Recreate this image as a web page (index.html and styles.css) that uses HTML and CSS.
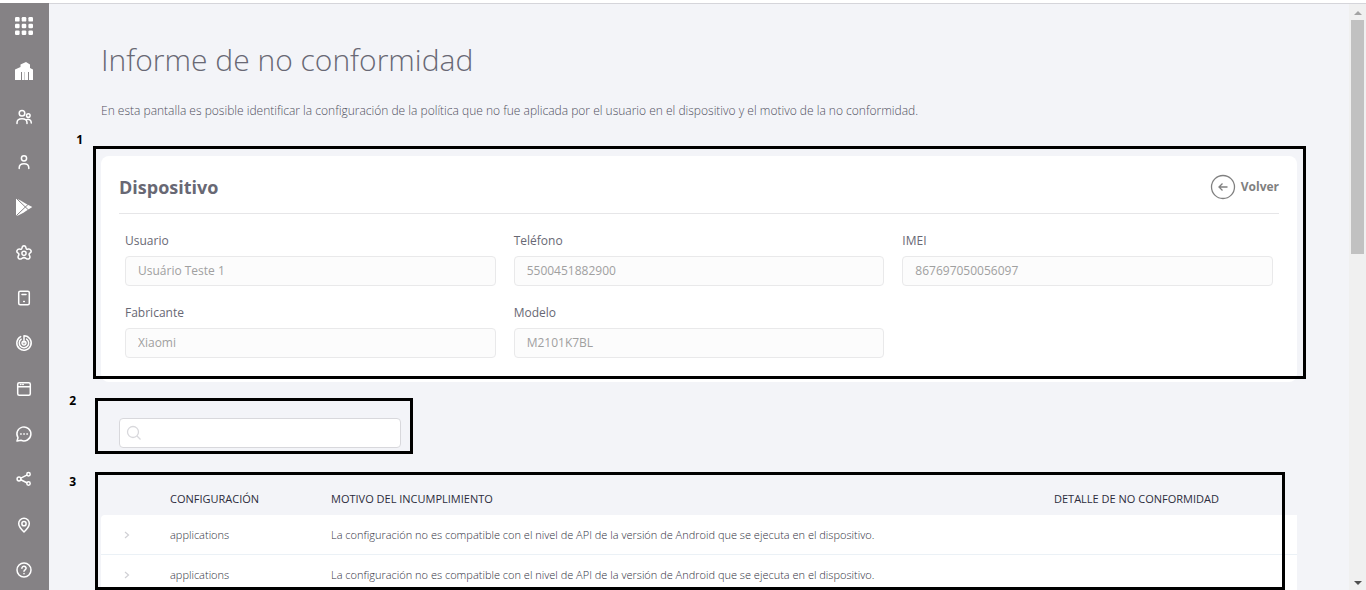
FILE: index.html
```html
<!DOCTYPE html>
<html lang="es">
<head>
<meta charset="utf-8">
<meta name="viewport" content="width=device-width, initial-scale=1">
<title>Informe de no conformidad</title>
<link rel="stylesheet" href="styles.css">
</head>
<body>
<div class="app">
  <nav class="sidebar" aria-label="Principal">
    <a href="#" aria-label="Aplicaciones"><svg viewBox="0 0 24 24" class="solid"><rect x="3" y="3" width="4.600" height="4.600" rx="1.200"/><rect x="9.700" y="3" width="4.600" height="4.600" rx="1.200"/><rect x="16.400" y="3" width="4.600" height="4.600" rx="1.200"/><rect x="3" y="9.700" width="4.600" height="4.600" rx="1.200"/><rect x="9.700" y="9.700" width="4.600" height="4.600" rx="1.200"/><rect x="16.400" y="9.700" width="4.600" height="4.600" rx="1.200"/><rect x="3" y="16.400" width="4.600" height="4.600" rx="1.200"/><rect x="9.700" y="16.400" width="4.600" height="4.600" rx="1.200"/><rect x="16.400" y="16.400" width="4.600" height="4.600" rx="1.200"/></svg></a>
    <a href="#" aria-label="Empresa"><svg viewBox="0 0 24 24" class="solid"><path d="M3 21V10.500L8.500 8V5.500L14 3l4 2.500V9l3 1.500V21h-4v-8h-1v8h-6v-8H9v8z"/><path class="groove" d="M12.500 21v-8"/></svg></a>
    <a href="#" aria-label="Grupos"><svg viewBox="0 0 24 24"><circle cx="10" cy="8.300" r="2.800"/><circle cx="16.300" cy="10.500" r="1.800"/><path d="M5 18.500v-.700c0-2.600 2.100-4 5-4s5 1.400 5 4v.700M14.500 14.600c2.600-.800 4.800.600 4.800 3.400"/></svg></a>
    <a href="#" aria-label="Usuarios"><svg viewBox="0 0 24 24"><circle cx="12" cy="8.300" r="2.600"/><path d="M7.200 18.500v-.700c0-2.600 2-4.100 4.800-4.100s4.800 1.500 4.800 4.100v.700"/></svg></a>
    <a href="#" aria-label="Play Store"><svg viewBox="0 0 24 24" class="solid"><path d="M4 3.500c3.500 1 6.500 3 10 5.300l6.300 3.200-6.300 4C10.500 18.500 7.500 20 4 21z"/><path class="seam" d="M4.500 3.500 16.500 15M4.500 20.500 16.500 9"/></svg></a>
    <a href="#" aria-label="Ajustes"><svg viewBox="0 0 24 24"><circle cx="12" cy="12.300" r="2.100"/><path d="M10 7c.3-3 3.700-3 4 0 .1.900.9 1.400 1.700 1.200 3.200-.6 4.600 2.400 2.200 4-.9.600-1 1.400-.5 2.200 1.600 2.800-.9 4.700-3.400 2.900-.9-.6-3.100-.6-4 0-2.500 1.800-5-.1-3.400-2.900.5-.8.400-1.600-.5-2.200-2.400-1.600-1-4.600 2.200-4 .8.200 1.600-.3 1.700-1.200z"/></svg></a>
    <a href="#" aria-label="Dispositivos"><svg viewBox="0 0 24 24"><rect x="6.700" y="5.200" width="10.600" height="13.600" rx="1.500"/><path d="M10 8.500h4M11.700 15.500h.6"/></svg></a>
    <a href="#" aria-label="Monitoreo"><svg viewBox="0 0 24 24"><path d="M12 12V4.800a7.200 7.200 0 1 1-3.300.8M9.200 8.200a4.700 4.700 0 1 0 5.400-.1M10.600 10.600a2 2 0 1 0 2.800 0"/></svg></a>
    <a href="#" aria-label="Navegador"><svg viewBox="0 0 24 24"><rect x="5.700" y="5.700" width="12.600" height="12.600" rx="1.500"/><path d="M6 9.700h12M8.500 7.600h.4M10.800 7.600h.4"/></svg></a>
    <a href="#" aria-label="Mensajes"><svg viewBox="0 0 24 24"><path d="M5 19l1-3.300A7 7 0 1 1 9 18.300z"/><path d="M8.700 12h.5M11.800 12h.5M14.900 12h.5"/></svg></a>
    <a href="#" aria-label="Compartir"><svg viewBox="0 0 24 24"><circle cx="7" cy="12" r="1.900"/><circle cx="16.500" cy="7.300" r="1.700"/><circle cx="16.500" cy="16.500" r="1.700"/><path d="m8.800 11.200 6-3M8.800 12.800l6 2.900"/></svg></a>
    <a href="#" aria-label="Ubicación"><svg viewBox="0 0 24 24"><path d="M12 19c-3.500-3.300-5.300-5.900-5.300-8.500a5.300 5.300 0 0 1 10.600 0c0 2.600-1.800 5.200-5.300 8.500z"/><circle cx="12" cy="10.700" r="2.100"/></svg></a>
    <a href="#" aria-label="Ayuda"><svg viewBox="0 0 24 24"><circle cx="12" cy="12" r="7"/><path d="M9.900 10.300c0-2.800 4.300-2.500 4.200 0 0 1.500-2.100 1.500-2.100 3M12 15.400v.4"/></svg></a>
  </nav>

  <main class="content">
    <h1>Informe de no conformidad</h1>
    <p class="intro">En esta pantalla es posible identificar la configuración de la política que no fue aplicada por el usuario en el dispositivo y el motivo de la no conformidad.</p>

    <section class="card">
      <header class="card-head">
        <h2>Dispositivo</h2>
        <a href="#" class="back"><svg viewBox="0 0 26 26"><circle cx="13" cy="13" r="11.500"/><path d="M17.500 13h-8M12.500 9.500 9 13l3.500 3.500"/></svg>Volver</a>
      </header>
      <form class="fields">
        <div class="field"><label for="usuario">Usuario</label><input id="usuario" type="text" value="Usuário Teste 1" disabled></div>
        <div class="field"><label for="telefono">Teléfono</label><input id="telefono" type="text" value="5500451882900" disabled></div>
        <div class="field"><label for="imei">IMEI</label><input id="imei" type="text" value="867697050056097" disabled></div>
        <div class="field"><label for="fabricante">Fabricante</label><input id="fabricante" type="text" value="Xiaomi" disabled></div>
        <div class="field"><label for="modelo">Modelo</label><input id="modelo" type="text" value="M2101K7BL" disabled></div>
      </form>
      <div class="mark mark-card"><b>1</b></div>
    </section>

    <section class="search">
      <svg viewBox="0 0 16 16"><circle cx="7" cy="7" r="5.500"/><path d="m11 11 3.500 3.500"/></svg>
      <input type="search" aria-label="Buscar">
      <div class="mark mark-search"><b>2</b></div>
    </section>

    <section class="report">
      <table>
        <thead>
          <tr><th class="col-toggle"></th><th class="col-config">CONFIGURACIÓN</th><th>MOTIVO DEL INCUMPLIMIENTO</th><th class="col-detail">DETALLE DE NO CONFORMIDAD</th></tr>
        </thead>
        <tbody>
          <tr><td><button type="button" aria-label="Expandir"><svg viewBox="0 0 8 8"><path d="m2 1 3.500 3L2 7"/></svg></button></td><td>applications</td><td>La configuración no es compatible con el nivel de API de la versión de Android que se ejecuta en el dispositivo.</td><td></td></tr>
          <tr><td><button type="button" aria-label="Expandir"><svg viewBox="0 0 8 8"><path d="m2 1 3.500 3L2 7"/></svg></button></td><td>applications</td><td>La configuración no es compatible con el nivel de API de la versión de Android que se ejecuta en el dispositivo.</td><td></td></tr>
        </tbody>
      </table>
      <div class="mark mark-report"><b>3</b></div>
    </section>
  </main>

  <div class="scrollbar" aria-hidden="true">
    <svg viewBox="0 0 8 4" class="up"><path d="M4 0 8 4H0z"/></svg>
    <div class="track"><div class="thumb"></div></div>
    <svg viewBox="0 0 8 4"><path d="M0 0h8L4 4z"/></svg>
  </div>
</div>
</body>
</html>
```
FILE: styles.css
```css
* { box-sizing: border-box; }

body {
  margin: 0;
  background: #fff;
  color: #686874;
  font: 12px/18px "Open Sans", "Noto Sans", sans-serif;
}

.app {
  display: flex;
  height: 100vh;
  padding-top: 3px;
  overflow: hidden;
}

.sidebar {
  flex: 0 0 49px;
  display: flex;
  flex-direction: column;
  align-items: center;
  justify-content: space-between;
  padding: 11px 1px 8px 0;
  background: #858285;
}
.sidebar a { height: 24px; }
.sidebar svg {
  display: block;
  width: 24px;
  height: 24px;
  fill: none;
  stroke: #fff;
  stroke-width: 1.5;
  stroke-linecap: round;
  stroke-linejoin: round;
}
.sidebar .solid { fill: #fff; stroke: none; }
.sidebar .seam { stroke: #858285; stroke-width: 1; }
.sidebar .groove { stroke: #d0d0d0; stroke-width: 1; stroke-linecap: butt; }

.content {
  flex: 1;
  min-width: 0;
  padding: 36px 52px 0;
  overflow: hidden;
  border-top: 1px solid #d5d5da;
  background: #f3f4f8;
}

h1 {
  margin: 0;
  font-size: 30px;
  line-height: 40px;
  font-weight: 300;
}
.intro { margin: 22px 0 36px; color: #505060; font-weight: 300; }

.card {
  position: relative;
  padding: 16px 18px 24px;
  border-radius: 8px;
  background: #fff;
}
.card-head {
  display: flex;
  align-items: center;
  justify-content: space-between;
  padding-bottom: 11px;
  border-bottom: 1px solid #e6e6e8;
}
h2 { margin: 0; font-size: 18px; line-height: 30px; font-weight: 700; }
.back {
  display: flex;
  align-items: center;
  gap: 5px;
  color: #808080;
  font-weight: 700;
  text-decoration: none;
}
.back svg { width: 26px; height: 26px; fill: none; stroke: #808080; stroke-width: 1.3; }

.fields {
  display: grid;
  grid-template-columns: repeat(3, 1fr);
  gap: 18px;
  padding: 18px 6px 0;
}
.field { display: flex; flex-direction: column; gap: 6px; }
.field input {
  width: 100%;
  height: 30px;
  padding: 0 12px 2px;
  border: 1px solid #e9e9ea;
  border-radius: 4px;
  background: #fcfcfc;
  color: #a0a0a0;
  font: inherit;
}

.search {
  position: relative;
  width: 282px;
  margin: 36px 0 34px 18px;
}
.search > svg {
  position: absolute;
  top: 7px;
  left: 7px;
  width: 16px;
  height: 16px;
  fill: none;
  stroke: #d8d8dc;
  stroke-width: 1.3;
}
.search input {
  display: block;
  width: 100%;
  height: 30px;
  padding: 0 12px 0 30px;
  border: 1px solid #d8d8dc;
  border-radius: 4px;
  background: #fff;
  font: inherit;
}

.report { position: relative; }
table {
  width: 100%;
  border-collapse: separate;
  border-spacing: 0;
  table-layout: fixed;
  font-size: 11px;
}
th, td { padding: 0; text-align: left; }
th { height: 33px; color: #2c2c3c; font-weight: 400; }
td {
  height: 40px;
  border-bottom: 1px solid #ebf1f6;
  background: #fff;
  color: #303040;
  font-weight: 300;
}
td:first-child { padding-left: 22px; }
tbody tr:first-child td:first-child { border-top-left-radius: 4px; }
.col-toggle { width: 69px; }
.col-config { width: 161px; }
.col-detail { width: 243px; }
td button { display: block; padding: 0; border: 0; background: none; }
td svg { display: block; width: 8px; height: 8px; fill: none; stroke: #d0d0d4; stroke-width: 1.2; }

/* Numbered call-outs drawn over the page */
.mark {
  position: absolute;
  border: 3px solid #000;
  pointer-events: none;
}
.mark b {
  position: absolute;
  right: 100%;
  top: -9px;
  margin-right: 22px;
  color: #000;
}
.mark-card { inset: -10px -9px 3px -8px; }
.mark-card b { top: -18px; margin-right: 13px; }
.mark-search { inset: -20px -12px -6px -24px; }
.mark-report { inset: -10px 12px 5px -6px; }
.mark-report b { top: -2px; }

.scrollbar {
  flex: 0 0 17px;
  display: flex;
  flex-direction: column;
  align-items: center;
  gap: 5px;
  padding: 7px 0 5px;
  border-top: 1px solid #d5d5da;
  background: #f0f0f0;
}
.scrollbar svg { width: 8px; height: 4px; fill: #505050; }
.scrollbar .up { fill: #a3a3a3; }
.track { flex: 1; width: 13px; }
.thumb { height: 42%; background: #c1c1c1; }
```
